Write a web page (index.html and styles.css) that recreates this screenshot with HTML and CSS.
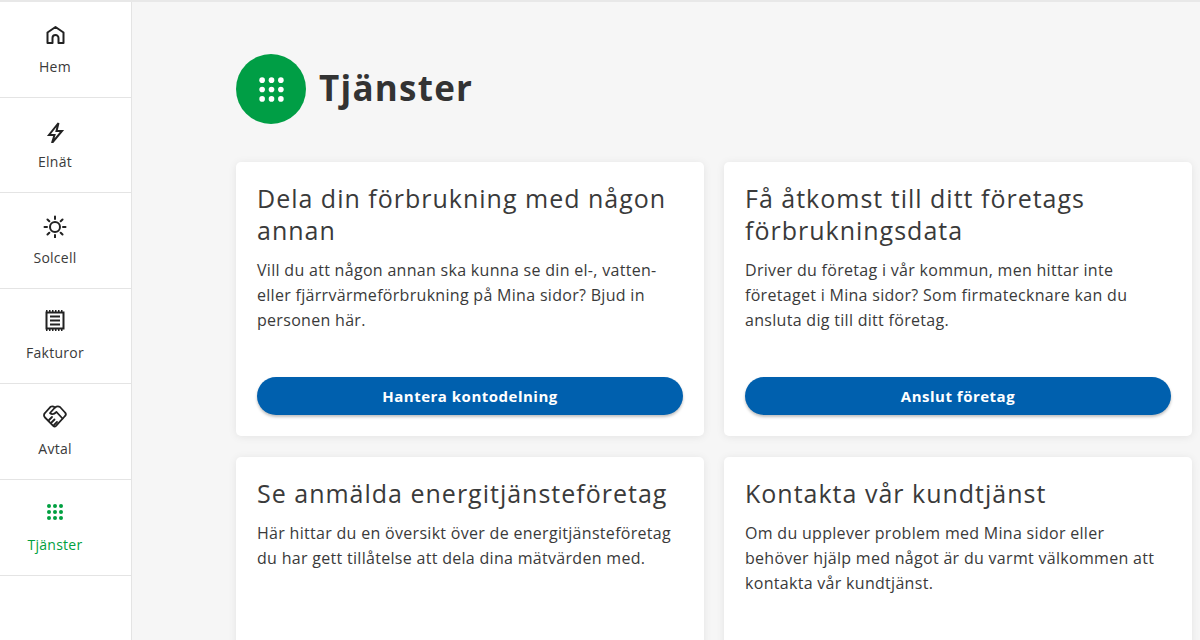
FILE: index.html
```html
<!DOCTYPE html>
<html lang="sv">
<head>
    <meta charset="UTF-8">
    <meta name="viewport" content="width=device-width, initial-scale=1.0">
    <title>Tjänster</title>
    <link rel="stylesheet" href="styles.css">
</head>
<body>
    <div class="layout">
        <nav class="sidebar">
            <a class="navItem" href="#">
                <svg class="navIcon" viewBox="0 0 24 24" fill="none" stroke="currentColor" stroke-width="2" stroke-linejoin="round"><path d="M4.500 20V9.500L12.500 4l8 5.500V20h-5v-5a3 3 0 0 0-6 0v5z"/></svg>
                <span>Hem</span>
            </a>
            <a class="navItem" href="#">
                <svg class="navIcon" viewBox="0 0 24 24" fill="none" stroke="currentColor" stroke-width="2" stroke-linejoin="miter"><path d="M15.500 4 6 16h5.500l-2.500 8 10-12h-5.500z"/></svg>
                <span>Elnät</span>
            </a>
            <a class="navItem" href="#">
                <svg class="navIcon" viewBox="0 0 24 24" fill="none" stroke="currentColor" stroke-width="2" stroke-linecap="round"><circle cx="12" cy="13" r="5"/><path d="M12 2.500V5M12 21v2.500M1.500 13H4M20 13h2.500M4.500 5.500 6.300 7.300M17.700 18.700l1.800 1.800M4.500 20.500l1.800-1.800M17.700 7.300l1.800-1.800"/></svg>
                <span>Solcell</span>
            </a>
            <a class="navItem" href="#">
                <svg class="navIcon" viewBox="0 0 24 24" fill="none" stroke="currentColor" stroke-width="2"><path d="M3.500 2.500h17v16h-17z"/><path d="M3 1h18M3 20h18" stroke-dasharray="1.500 1.500"/><path d="M7 6.500h10M7 10.500h10M7 14.500h10"/></svg>
                <span>Fakturor</span>
            </a>
            <a class="navItem" href="#">
                <svg class="navIcon" viewBox="0 0 24 24" fill="none" stroke="currentColor" stroke-width="1.800" stroke-linejoin="round" stroke-linecap="round"><path d="M7.500 1.800c1.500-.8 3-.5 4.500.7 1.500-1.200 3.500-1.500 5-.5l5 5.500a2.500 2.500 0 0 1 0 3.500L13 20.800a2 2 0 0 1-2.800 0L2 12.500a3 3 0 0 1 0-4.500z"/><path d="M12 2.500 7 8c2 2 4 1.500 6.500-1l6 6.500M8.500 17.500l3-3M6 15l3-3M11 20l3-3"/></svg>
                <span>Avtal</span>
            </a>
            <a class="navItem active" href="#">
                <svg class="navIcon" viewBox="0 0 24 24" fill="currentColor"><circle cx="6" cy="5" r="2"/><circle cx="12" cy="5" r="2"/><circle cx="18" cy="5" r="2"/><circle cx="6" cy="11" r="2"/><circle cx="12" cy="11" r="2"/><circle cx="18" cy="11" r="2"/><circle cx="6" cy="17" r="2"/><circle cx="12" cy="17" r="2"/><circle cx="18" cy="17" r="2"/></svg>
                <span>Tjänster</span>
            </a>
        </nav>
        <main class="content">
            <div class="pageHead">
                <div class="headBadge">
                    <svg class="headIcon" viewBox="0 0 24 24" fill="currentColor"><circle cx="3" cy="3" r="2.700"/><circle cx="12" cy="3" r="2.700"/><circle cx="21" cy="3" r="2.700"/><circle cx="3" cy="12" r="2.700"/><circle cx="12" cy="12" r="2.700"/><circle cx="21" cy="12" r="2.700"/><circle cx="3" cy="21" r="2.700"/><circle cx="12" cy="21" r="2.700"/><circle cx="21" cy="21" r="2.700"/></svg>
                </div>
                <h1>Tjänster</h1>
            </div>
            <div class="cards">
                <section class="card">
                    <h2>Dela din förbrukning med någon annan</h2>
                    <p>Vill du att någon annan ska kunna se din el-, vatten- eller fjärrvärmeförbrukning på Mina sidor? Bjud in personen här.</p>
                    <button class="cardBtn">Hantera kontodelning</button>
                </section>
                <section class="card">
                    <h2>Få åtkomst till ditt företags förbrukningsdata</h2>
                    <p>Driver du företag i vår kommun, men hittar inte företaget i Mina sidor? Som firmatecknare kan du ansluta dig till ditt företag.</p>
                    <button class="cardBtn">Anslut företag</button>
                </section>
                <section class="card">
                    <h2>Se anmälda energitjänsteföretag</h2>
                    <p>Här hittar du en översikt över de energitjänsteföretag du har gett tillåtelse att dela dina mätvärden med.</p>
                </section>
                <section class="card">
                    <h2>Kontakta vår kundtjänst</h2>
                    <p>Om du upplever problem med Mina sidor eller behöver hjälp med något är du varmt välkommen att kontakta vår kundtjänst.</p>
                </section>
            </div>
        </main>
    </div>
</body>
</html>
```

FILE: styles.css
```css
* {
    box-sizing: border-box;
}
html, body {
    height: 100%;
    overflow: hidden;
}
body {
    margin: 0;
    background-color: #f6f6f6;
    color: #333;
    font-family: "Open Sans", "Liberation Sans", sans-serif;
}
.layout {
    display: flex;
    height: 640px;
    overflow: hidden;
    border-top: 2px solid #e8e8e8;
}
.sidebar {
    width: 132px;
    flex-shrink: 0;
    background-color: #fff;
    border-right: 1px solid #e4e4e4;
}
.navItem {
    display: flex;
    flex-direction: column;
    align-items: center;
    height: 95.6px;
    padding-top: 21px;
    padding-right: 21px;
    border-bottom: 1px solid #e4e4e4;
    color: #3a3a3a;
    font-size: 14px;
    line-height: 20px;
    letter-spacing: 0.25px;
    text-decoration: none;
}
.navItem.active {
    color: #00a040;
}
.navIcon {
    width: 24px;
    height: 24px;
    margin-bottom: 9.6px;
    color: #222;
}
.active .navIcon {
    color: #00a040;
}
.content {
    flex: 1;
    padding: 52px 8px 0 104px;
}
.pageHead {
    display: flex;
    align-items: center;
    gap: 13px;
    margin-bottom: 38px;
}
.headBadge {
    display: flex;
    justify-content: center;
    align-items: center;
    width: 70px;
    height: 70px;
    border-radius: 50%;
    background-color: #009e45;
    color: #fff;
}
.headIcon {
    width: 25px;
    height: 25px;
}
h1 {
    margin: 0 0 4px;
    font-size: 35px;
    font-weight: 700;
    letter-spacing: 1.25px;
}
.cards {
    display: grid;
    grid-template-columns: 468px 468px;
    grid-auto-rows: 274px;
    gap: 21px 20px;
}
.card {
    display: flex;
    flex-direction: column;
    padding: 20px 21px 21px;
    background-color: #fff;
    border-radius: 5px;
    box-shadow: 0 1px 8px rgba(0, 0, 0, 0.08);
}
h2 {
    margin: 0 0 12px;
    font-size: 25px;
    font-weight: 400;
    line-height: 32px;
    letter-spacing: 1px;
    color: #3a3a3a;
}
.card p {
    margin: 0;
    font-size: 16px;
    line-height: 25px;
    letter-spacing: 0.3px;
    color: #3a3a3a;
}
.cardBtn {
    height: 38px;
    margin-top: auto;
    border: 0;
    border-radius: 19px;
    background-color: #0060ae;
    box-shadow: 0 2px 3px rgba(0, 0, 0, 0.25);
    color: #fff;
    font-family: inherit;
    font-size: 15px;
    font-weight: 700;
    letter-spacing: 0.5px;
}
```
